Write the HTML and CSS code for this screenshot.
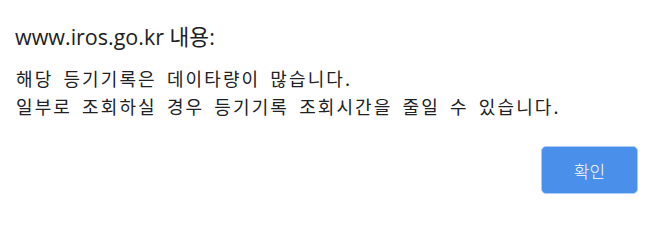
FILE: index.html
```html
<!DOCTYPE html>
<html lang="ko">
<head>
<meta charset="utf-8">
<link rel="stylesheet" href="styles.css">
</head>
<body>
<div class="dialog">
  <div class="title">www.iros.go.kr 내용:</div>
  <div class="message">해당 등기기록은 데이타량이 많습니다.<br>일부로 조회하실 경우 등기기록 조회시간을 줄일 수 있습니다.</div>
  <div class="actions">
    <button class="ok">확인</button>
  </div>
</div>
</body>
</html>
```
FILE: styles.css
```css
html, body {
  margin: 0;
  padding: 0;
  background: #ffffff;
}
.dialog {
  width: 646px;
  height: 211px;
  box-sizing: border-box;
  padding: 23px 8px 0 16px;
  display: flex;
  flex-direction: column;
}
.title {
  font-family: "Open Sans", "Noto Sans CJK KR", sans-serif;
  font-size: 21.5px;
  line-height: 28px;
  color: #202124;
  margin-left: -1px;
}
.message {
  margin-top: 13px;
  font-family: "Noto Sans CJK KR", sans-serif;
  font-size: 18px;
  line-height: 28px;
  letter-spacing: 2.1px;
  word-spacing: 3px;
  color: #202124;
}
.actions {
  margin-top: 26px;
  display: flex;
  justify-content: flex-end;
}
.ok {
  width: 97px;
  height: 48px;
  border: 1px solid #a9cdf6;
  border-radius: 5px;
  background: #4a8fe9;
  color: #ffffff;
  font-family: "Noto Sans CJK KR", sans-serif;
  font-size: 17px;
  font-weight: 300;
  padding: 0;
}
```
